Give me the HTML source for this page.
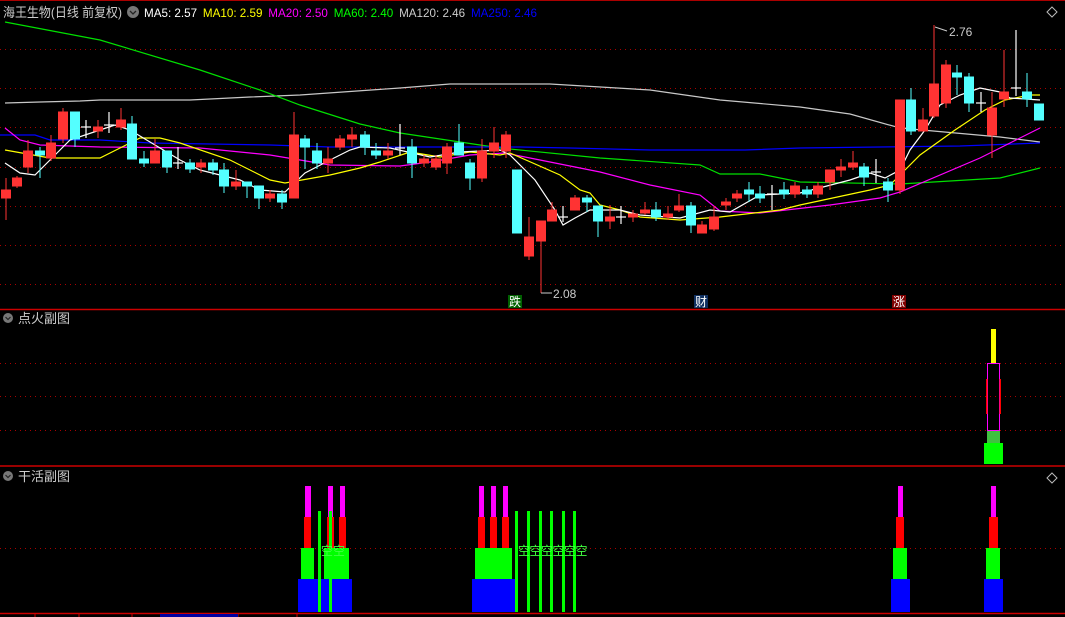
<!DOCTYPE html>
<html><head><meta charset="utf-8"><style>
html,body{margin:0;padding:0;background:#000;width:1065px;height:617px;overflow:hidden}
svg{display:block}
text{font-family:"Liberation Sans","Noto Sans CJK SC",sans-serif}
</style></head><body>
<svg width="1065" height="617" viewBox="0 0 1065 617" xmlns="http://www.w3.org/2000/svg">
<rect width="1065" height="617" fill="#000"/>
<line x1="0" y1="0.5" x2="1065" y2="0.5" stroke="#a00" stroke-width="1"/>
<g stroke="#a00" stroke-dasharray="1,4" stroke-width="1">
<line x1="0" y1="49.5" x2="1065" y2="49.5"/><line x1="0" y1="88.5" x2="1065" y2="88.5"/>
<line x1="0" y1="127.5" x2="1065" y2="127.5"/><line x1="0" y1="167.5" x2="1065" y2="167.5"/>
<line x1="0" y1="206.5" x2="1065" y2="206.5"/><line x1="0" y1="245.5" x2="1065" y2="245.5"/>
<line x1="0" y1="284.5" x2="1065" y2="284.5"/>
<line x1="0" y1="363.5" x2="1065" y2="363.5"/><line x1="0" y1="396.5" x2="1065" y2="396.5"/>
<line x1="0" y1="430.5" x2="1065" y2="430.5"/>
<line x1="0" y1="548.5" x2="1065" y2="548.5"/>
</g>
<g stroke="#c00" stroke-width="1.5">
<line x1="0" y1="309.5" x2="1065" y2="309.5"/>
<line x1="0" y1="466" x2="1065" y2="466"/>
<line x1="0" y1="613.5" x2="1065" y2="613.5"/>
</g>
<g stroke="#c00"><line x1="35" y1="613" x2="35" y2="617"/><line x1="79" y1="613" x2="79" y2="617"/><line x1="132" y1="613" x2="132" y2="617"/><line x1="238" y1="613" x2="238" y2="617"/><line x1="297" y1="613" x2="297" y2="617"/></g>
<rect x="160" y="614" width="78" height="3" fill="#0000a0"/>
<g fill="none" stroke-width="1.2">
<polyline stroke="#c8c8c8" points="5,103 40,102 80,101 100,100 190,100 250,97 300,95 400,88 450,84 550,84 650,90 720,100 800,107 850,114 900,128 1000,137 1040,142"/>
<polyline stroke="#00e000" points="5,22 100,40 200,70 260,90 300,105 360,124 400,133 500,148 600,158 700,165 720,174 760,174 800,182 900,184 1000,178 1040,168"/>
<polyline stroke="#0000ff" points="0,135 35,135 50,140 100,140 150,143 270,145 330,147 520,147 570,148 650,150 745,150 800,148 960,146 1040,143"/>
<polyline stroke="#ff00ff" points="5,128 20,140 40,145 100,147 200,148 270,155 330,165 400,166 430,162 470,155 505,153 540,160 600,172 650,185 700,195 720,211 760,213 830,205 880,198 900,192 980,158 1040,128"/>
<polyline stroke="#ffff00" points="5,150 50,158 100,158 140,138 160,138 180,143 230,160 270,180 285,183 330,175 360,168 380,162 410,152 440,157 470,152 500,155 510,153 560,175 580,190 590,193 600,205 620,210 640,217 680,220 720,217 780,210 800,205 870,190 890,185 900,175 920,155 955,130 985,110 1005,100 1030,95 1040,95"/>
<polyline stroke="#ffffff" points="5,163 20,173 35,175 50,160 70,140 100,130 115,125 130,130 160,148 180,160 200,170 240,180 260,190 285,192 305,173 330,160 350,150 360,147 390,148 430,157 460,152 500,150 510,155 535,180 555,210 563,225 575,218 590,210 620,210 640,215 680,218 710,210 730,212 760,195 800,193 850,180 870,173 885,178 900,170 910,150 925,130 940,105 960,95 980,88 1000,92 1010,98 1040,100"/>
</g>
<g stroke-width="1">
<g stroke="#ff3333" fill="#ff3333">
<line x1="6" y1="178" x2="6" y2="220"/><rect x="1.5" y="190" width="9" height="8"/>
<line x1="17" y1="176" x2="17" y2="188"/><rect x="12.5" y="178" width="9" height="8"/>
<line x1="28" y1="140" x2="28" y2="173"/><rect x="23.5" y="151" width="9" height="16"/>
<line x1="51" y1="135" x2="51" y2="161"/><rect x="46.5" y="143" width="9" height="15"/>
<line x1="63" y1="108" x2="63" y2="143"/><rect x="58.5" y="112" width="9" height="27"/>
<line x1="98" y1="120" x2="98" y2="138"/><rect x="93.5" y="127" width="9" height="4"/>
<line x1="121" y1="108" x2="121" y2="130"/><rect x="116.5" y="120" width="9" height="7"/>
<line x1="155" y1="139" x2="155" y2="163"/><rect x="150.5" y="151" width="9" height="12"/>
<line x1="201" y1="159" x2="201" y2="173"/><rect x="196.5" y="163" width="9" height="4"/>
<line x1="236" y1="170" x2="236" y2="190"/><rect x="231.5" y="182" width="9" height="4"/>
<line x1="270" y1="190" x2="270" y2="202"/><rect x="265.5" y="194" width="9" height="4"/>
<line x1="294" y1="112" x2="294" y2="198"/><rect x="289.5" y="135" width="9" height="63"/>
<line x1="328" y1="147" x2="328" y2="173"/><rect x="323.5" y="159" width="9" height="4"/>
<line x1="340" y1="135" x2="340" y2="150"/><rect x="335.5" y="139" width="9" height="8"/>
<line x1="352" y1="127" x2="352" y2="147"/><rect x="347.5" y="135" width="9" height="4"/>
<line x1="388" y1="143" x2="388" y2="159"/><rect x="383.5" y="151" width="9" height="4"/>
<line x1="424" y1="155" x2="424" y2="167"/><rect x="419.5" y="159" width="9" height="4"/>
<line x1="436" y1="155" x2="436" y2="170"/><rect x="431.5" y="159" width="9" height="8"/>
<line x1="447" y1="143" x2="447" y2="174"/><rect x="442.5" y="147" width="9" height="16"/>
<line x1="482" y1="139" x2="482" y2="182"/><rect x="477.5" y="151" width="9" height="27"/>
<line x1="494" y1="127" x2="494" y2="158"/><rect x="489.5" y="143" width="9" height="8"/>
<line x1="506" y1="131" x2="506" y2="158"/><rect x="501.5" y="135" width="9" height="16"/>
<line x1="529" y1="217" x2="529" y2="260"/><rect x="524.5" y="237" width="9" height="19"/>
<line x1="541" y1="221" x2="541" y2="293"/><rect x="536.5" y="221" width="9" height="20"/>
<line x1="552" y1="202" x2="552" y2="221"/><rect x="547.5" y="210" width="9" height="11"/>
<line x1="575" y1="195" x2="575" y2="210"/><rect x="570.5" y="198" width="9" height="12"/>
<line x1="610" y1="205" x2="610" y2="229"/><rect x="605.5" y="217" width="9" height="4"/>
<line x1="633" y1="210" x2="633" y2="222"/><rect x="628.5" y="214" width="9" height="3"/>
<line x1="645" y1="202" x2="645" y2="215"/><rect x="640.5" y="210" width="9" height="3"/>
<line x1="668" y1="206" x2="668" y2="220"/><rect x="663.5" y="214" width="9" height="3"/>
<line x1="679" y1="194" x2="679" y2="212"/><rect x="674.5" y="206" width="9" height="4"/>
<line x1="702" y1="221" x2="702" y2="233"/><rect x="697.5" y="225" width="9" height="8"/>
<line x1="714" y1="206" x2="714" y2="231"/><rect x="709.5" y="217" width="9" height="12"/>
<line x1="726" y1="198" x2="726" y2="210"/><rect x="721.5" y="202" width="9" height="3"/>
<line x1="737" y1="190" x2="737" y2="202"/><rect x="732.5" y="194" width="9" height="4"/>
<line x1="795" y1="182" x2="795" y2="198"/><rect x="790.5" y="186" width="9" height="8"/>
<line x1="818" y1="182" x2="818" y2="198"/><rect x="813.5" y="186" width="9" height="8"/>
<line x1="830" y1="170" x2="830" y2="190"/><rect x="825.5" y="170" width="9" height="12"/>
<line x1="841" y1="159" x2="841" y2="177"/><rect x="836.5" y="167" width="9" height="3"/>
<line x1="853" y1="151" x2="853" y2="170"/><rect x="848.5" y="163" width="9" height="4"/>
<line x1="900" y1="100" x2="900" y2="194"/><rect x="895.5" y="100" width="9" height="90"/>
<line x1="923" y1="108" x2="923" y2="131"/><rect x="918.5" y="120" width="9" height="11"/>
<line x1="934" y1="25" x2="934" y2="118"/><rect x="929.5" y="84" width="9" height="32"/>
<line x1="946" y1="60" x2="946" y2="108"/><rect x="941.5" y="65" width="9" height="38"/>
<line x1="992" y1="92" x2="992" y2="158"/><rect x="987.5" y="108" width="9" height="27"/>
<line x1="1004" y1="50" x2="1004" y2="107"/><rect x="999.5" y="92" width="9" height="7"/>
</g>
<g stroke="#54ffff" fill="#54ffff">
<line x1="40" y1="147" x2="40" y2="178"/><rect x="35.5" y="151" width="9" height="4"/>
<line x1="75" y1="112" x2="75" y2="147"/><rect x="70.5" y="112" width="9" height="27"/>
<line x1="132" y1="116" x2="132" y2="159"/><rect x="127.5" y="124" width="9" height="35"/>
<line x1="144" y1="151" x2="144" y2="167"/><rect x="139.5" y="159" width="9" height="4"/>
<line x1="167" y1="151" x2="167" y2="173"/><rect x="162.5" y="151" width="9" height="16"/>
<line x1="190" y1="159" x2="190" y2="173"/><rect x="185.5" y="163" width="9" height="6"/>
<line x1="213" y1="159" x2="213" y2="175"/><rect x="208.5" y="163" width="9" height="7"/>
<line x1="224" y1="163" x2="224" y2="193"/><rect x="219.5" y="170" width="9" height="16"/>
<line x1="247" y1="182" x2="247" y2="198"/><rect x="242.5" y="182" width="9" height="4"/>
<line x1="259" y1="186" x2="259" y2="209"/><rect x="254.5" y="186" width="9" height="12"/>
<line x1="282" y1="190" x2="282" y2="209"/><rect x="277.5" y="194" width="9" height="8"/>
<line x1="305" y1="135" x2="305" y2="169"/><rect x="300.5" y="139" width="9" height="8"/>
<line x1="317" y1="143" x2="317" y2="169"/><rect x="312.5" y="151" width="9" height="12"/>
<line x1="365" y1="131" x2="365" y2="155"/><rect x="360.5" y="135" width="9" height="12"/>
<line x1="376" y1="143" x2="376" y2="159"/><rect x="371.5" y="151" width="9" height="4"/>
<line x1="412" y1="139" x2="412" y2="178"/><rect x="407.5" y="147" width="9" height="16"/>
<line x1="459" y1="124" x2="459" y2="155"/><rect x="454.5" y="143" width="9" height="12"/>
<line x1="470" y1="159" x2="470" y2="190"/><rect x="465.5" y="163" width="9" height="15"/>
<rect x="512.5" y="170" width="9" height="63"/>
<line x1="587" y1="195" x2="587" y2="212"/><rect x="582.5" y="198" width="9" height="4"/>
<line x1="598" y1="206" x2="598" y2="237"/><rect x="593.5" y="206" width="9" height="15"/>
<line x1="656" y1="202" x2="656" y2="221"/><rect x="651.5" y="210" width="9" height="7"/>
<line x1="691" y1="202" x2="691" y2="233"/><rect x="686.5" y="206" width="9" height="19"/>
<line x1="749" y1="182" x2="749" y2="202"/><rect x="744.5" y="190" width="9" height="4"/>
<line x1="760" y1="186" x2="760" y2="203"/><rect x="755.5" y="194" width="9" height="4"/>
<line x1="784" y1="182" x2="784" y2="199"/><rect x="779.5" y="190" width="9" height="4"/>
<line x1="807" y1="186" x2="807" y2="198"/><rect x="802.5" y="190" width="9" height="4"/>
<line x1="864" y1="163" x2="864" y2="186"/><rect x="859.5" y="167" width="9" height="10"/>
<line x1="888" y1="178" x2="888" y2="202"/><rect x="883.5" y="182" width="9" height="8"/>
<line x1="911" y1="88" x2="911" y2="135"/><rect x="906.5" y="100" width="9" height="31"/>
<line x1="957" y1="65" x2="957" y2="95"/><rect x="952.5" y="73" width="9" height="4"/>
<line x1="969" y1="73" x2="969" y2="112"/><rect x="964.5" y="77" width="9" height="26"/>
<line x1="1027" y1="73" x2="1027" y2="107"/><rect x="1022.5" y="92" width="9" height="7"/>
<rect x="1034.5" y="104" width="9" height="16"/>
</g>
<g stroke="#fff" stroke-width="1.2">
<line x1="86" y1="120" x2="86" y2="138"/><line x1="81" y1="127" x2="91" y2="127"/>
<line x1="109" y1="112" x2="109" y2="133"/><line x1="104" y1="125" x2="114" y2="125"/>
<line x1="178" y1="147" x2="178" y2="169"/><line x1="173" y1="163" x2="183" y2="163"/>
<line x1="400" y1="124" x2="400" y2="155"/><line x1="395" y1="148" x2="405" y2="148"/>
<line x1="563" y1="206" x2="563" y2="222"/><line x1="558" y1="217" x2="568" y2="217"/>
<line x1="621" y1="206" x2="621" y2="224"/><line x1="616" y1="217" x2="626" y2="217"/>
<line x1="772" y1="185" x2="772" y2="210"/><line x1="767" y1="194" x2="777" y2="194"/>
<line x1="876" y1="159" x2="876" y2="183"/><line x1="871" y1="172" x2="881" y2="172"/>
<line x1="981" y1="92" x2="981" y2="112"/><line x1="976" y1="103" x2="986" y2="103"/>
<line x1="1016" y1="30" x2="1016" y2="96"/><line x1="1011" y1="88" x2="1021" y2="88"/>
</g>
</g>
<g fill="#ccc" font-size="12">
<line x1="541" y1="293" x2="552" y2="293" stroke="#ccc"/><text x="553" y="298">2.08</text>
<line x1="935" y1="27" x2="947" y2="31" stroke="#ccc"/><text x="949" y="36">2.76</text>
</g>
<rect x="508" y="295" width="14" height="13" fill="#006000"/><text x="509" y="306" font-size="12" fill="#fff">跌</text>
<rect x="694" y="295" width="14" height="13" fill="#103060"/><text x="695" y="306" font-size="12" fill="#fff">财</text>
<rect x="892" y="295" width="14" height="13" fill="#800000"/><text x="893" y="306" font-size="12" fill="#fff">涨</text>
<text x="3" y="17" font-size="13" fill="#ccc" textLength="119" lengthAdjust="spacingAndGlyphs">海王生物(日线 前复权)</text>
<circle cx="133" cy="12" r="6" fill="#777"/><path d="M130,11 l3,3 l3,-3" stroke="#222" fill="none" stroke-width="1.3"/>
<text x="144" y="17" font-size="12" textLength="393" lengthAdjust="spacingAndGlyphs"><tspan fill="#fff">MA5: 2.57</tspan><tspan fill="#ff0" dx="6">MA10: 2.59</tspan><tspan fill="#f0f" dx="6">MA20: 2.50</tspan><tspan fill="#0f0" dx="6">MA60: 2.40</tspan><tspan fill="#ccc" dx="6">MA120: 2.46</tspan><tspan fill="#00f" dx="6">MA250: 2.46</tspan></text>
<path d="M1052,7 l5,5 l-5,5 l-5,-5z" fill="none" stroke="#bbb"/>
<circle cx="8" cy="318" r="5" fill="#777"/><path d="M5.5,317 l2.5,2.5 l2.5,-2.5" stroke="#222" fill="none" stroke-width="1.2"/>
<text x="18" y="323" font-size="13" fill="#ccc">点火副图</text>
<circle cx="8" cy="476" r="5" fill="#777"/><path d="M5.5,475 l2.5,2.5 l2.5,-2.5" stroke="#222" fill="none" stroke-width="1.2"/>
<text x="18" y="481" font-size="13" fill="#ccc">干活副图</text>
<path d="M1052,473 l5,5 l-5,5 l-5,-5z" fill="none" stroke="#bbb"/>
<rect x="991" y="329" width="5" height="34" fill="#ff0"/>
<rect x="987.5" y="363.5" width="12" height="67" fill="none" stroke="#f0f"/>
<rect x="986" y="379" width="1.5" height="35" fill="#f00"/><rect x="999.5" y="379" width="1.5" height="35" fill="#f00"/>
<rect x="987" y="431" width="13" height="12" fill="#40c040"/>
<rect x="984" y="443" width="19" height="21" fill="#0f0"/>
<rect x="298" y="579" width="54" height="33" fill="#00f"/>
<rect x="301" y="548" width="13" height="31" fill="#0f0"/><rect x="324" y="548" width="25" height="31" fill="#0f0"/>
<rect x="304" y="517" width="7" height="31" fill="#f00"/><rect x="327" y="517" width="7" height="31" fill="#f00"/><rect x="339" y="517" width="7" height="31" fill="#f00"/>
<rect x="305" y="486" width="6" height="31" fill="#f0f"/><rect x="328" y="486" width="5" height="31" fill="#f0f"/><rect x="340" y="486" width="5" height="31" fill="#f0f"/>
<rect x="318" y="511" width="3" height="101" fill="#0f0"/><rect x="329" y="511" width="3" height="101" fill="#0f0"/>
<rect x="472" y="579" width="43" height="33" fill="#00f"/>
<rect x="475" y="548" width="37" height="31" fill="#0f0"/>
<rect x="478" y="517" width="7" height="31" fill="#f00"/><rect x="490" y="517" width="7" height="31" fill="#f00"/><rect x="502" y="517" width="7" height="31" fill="#f00"/>
<rect x="479" y="486" width="5" height="31" fill="#f0f"/><rect x="491" y="486" width="5" height="31" fill="#f0f"/><rect x="503" y="486" width="5" height="31" fill="#f0f"/>
<g fill="#0f0"><rect x="515" y="511" width="3" height="101"/><rect x="527" y="511" width="3" height="101"/><rect x="539" y="511" width="3" height="101"/><rect x="550" y="511" width="3" height="101"/><rect x="562" y="511" width="3" height="101"/><rect x="573" y="511" width="3" height="101"/></g>
<rect x="891" y="579" width="19" height="33" fill="#00f"/><rect x="893" y="548" width="14" height="31" fill="#0f0"/><rect x="896" y="517" width="8" height="31" fill="#f00"/><rect x="898" y="486" width="5" height="31" fill="#f0f"/>
<rect x="984" y="579" width="19" height="33" fill="#00f"/><rect x="986" y="548" width="14" height="31" fill="#0f0"/><rect x="989" y="517" width="9" height="31" fill="#f00"/><rect x="991" y="486" width="5" height="31" fill="#f0f"/>
<text x="321" y="555" font-size="12" fill="#40ff40">空空</text>
<text x="518" y="555" font-size="12" fill="#40ff40" letter-spacing="-0.5">空空空空空空</text>
</svg>
</body></html>
